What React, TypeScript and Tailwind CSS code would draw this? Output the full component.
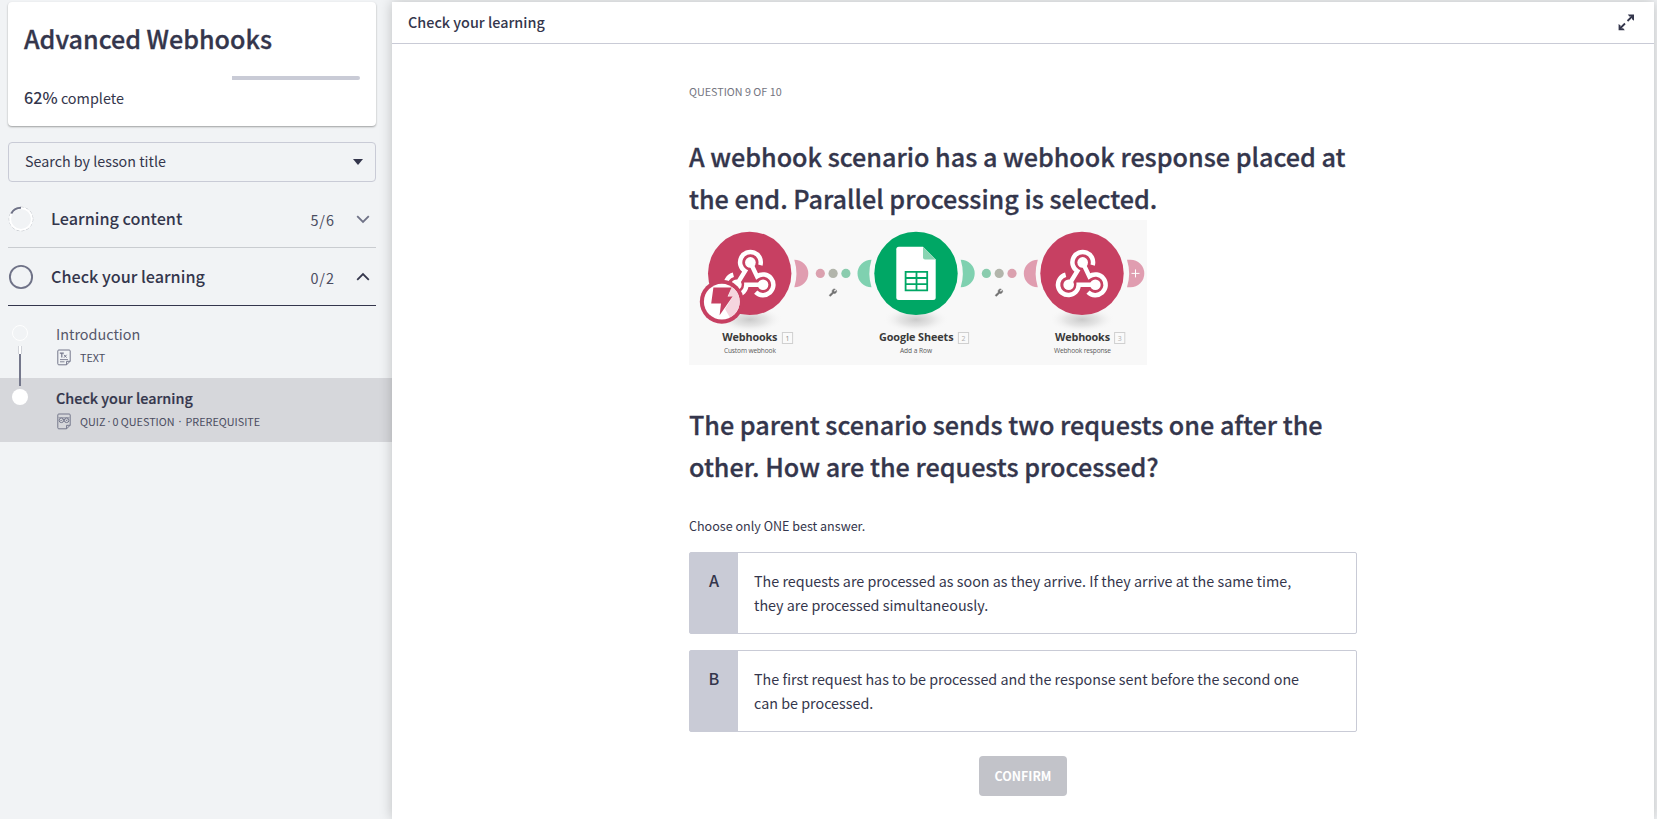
import type { ReactNode } from "react";

function ExpandIcon() {
  return (
    <svg width="17" height="17" viewBox="0 0 17 17" fill="none" stroke="#34364c" strokeWidth="1.8">
      <path d="M9.5 7L14.5 2" />
      <path d="M7 9.5L2 14.5" />
      <path d="M9.8 0.6H16V6.8L14 5.2V2.6H11.4z" fill="#34364c" stroke="none" />
      <path d="M6.8 16.2H0.6V10L2.6 11.6V14.2H5.2z" fill="#34364c" stroke="none" />
    </svg>
  );
}

function Chevron({ up }: { up?: boolean }) {
  return (
    <svg width="14" height="14" viewBox="0 0 14 14" fill="none" stroke={up ? "#34364c" : "#6f7287"} strokeWidth="1.8">
      <path d={up ? "M1.2 9.8L7 4l5.8 5.8" : "M1.2 4.2L7 10l5.8-5.8"} />
    </svg>
  );
}

function Ring({ partial }: { partial?: boolean }) {
  return (
    <svg width="26" height="26" viewBox="0 0 26 26" fill="none">
      {partial ? (
        <>
          <circle cx="13" cy="13" r="11.8" stroke="#aeb2ba" strokeWidth="0.8" strokeDasharray="3 2" />
          <circle cx="13" cy="13" r="10.9" stroke="#fff" strokeWidth="1.8" />
          <path d="M3.3 7.4A11.2 11.2 0 0 1 13 1.8" stroke="#6f7287" strokeWidth="2" />
        </>
      ) : (
        <circle cx="13" cy="13" r="11.1" stroke="#6f7287" strokeWidth="1.9" />
      )}
    </svg>
  );
}

function LessonIcon({ quiz }: { quiz?: boolean }) {
  return (
    <svg width="14" height="17" viewBox="0 0 14 17" fill="none" stroke="#74778b" strokeWidth="1">
      <path d="M1.8 1h10.4a1 1 0 0 1 1 1v10.2l-3.6 3.6H1.8a1 1 0 0 1-1-1V2a1 1 0 0 1 1-1z" />
      <path d="M13.2 12.3H9.6v3.5" />
      {quiz ? (
        <>
          <circle cx="4.4" cy="7.3" r="2.3" />
          <circle cx="9.6" cy="7.3" r="2.3" />
          <path d="M3.4 7.2l.8.8 1.3-1.5M8.8 6.5l1.6 1.6M10.4 6.5L8.8 8.1" strokeWidth="0.8" />
          <path d="M1.5 4.6h11" strokeWidth="0.6" />
        </>
      ) : (
        <>
          <path d="M2.8 4.2h4M4.8 4.2v4.3" strokeWidth="1.2" />
          <path d="M7 5.8l2.6 2.8M9.6 5.8L7 8.6" />
          <path d="M3 10.6h8M3 12.8h4.5" strokeWidth="0.9" />
        </>
      )}
    </svg>
  );
}

function HookNode({ cx }: { cx: number }) {
  return (
    <>
      <circle cx={cx} cy="53.4" r="41.7" fill="#c74062" />
      <g transform={`translate(${cx} 53.4) scale(0.3333) translate(-111 -100)`}>
        <g fill="none" stroke="#fff" strokeWidth="13.5">
          <path d="M143 75A31 31 0 1 0 97 93L73 132" />
          <path d="M113 67L133 109A31 31 0 1 1 129 156" />
          <path d="M62 104A31 31 0 1 0 101 134H151" />
        </g>
        <g fill="#fff">
          <circle cx="113" cy="67" r="16" />
          <circle cx="71" cy="134" r="16" />
          <circle cx="151" cy="134" r="16" />
        </g>
      </g>
    </>
  );
}

function Wrench({ x }: { x: number }) {
  return (
    <g transform={`translate(${x - 4.7} 68.2) scale(0.38)`}>
      <path
        d="M14.7 6.3a1 1 0 0 0 0 1.4l1.6 1.6a1 1 0 0 0 1.4 0l3.77-3.77a6 6 0 0 1-7.94 7.94l-6.91 6.91a2.12 2.12 0 0 1-3-3l6.91-6.91a6 6 0 0 1 7.94-7.94z"
        fill="#707070"
        stroke="#707070"
        strokeWidth="1.5"
      />
    </g>
  );
}

function Dots({ x, colors }: { x: number; colors: string[] }) {
  return (
    <>
      {colors.map((c, i) => (
        <circle key={i} cx={x + i * 12.8} cy="53.4" r="4.6" fill={c} />
      ))}
    </>
  );
}

function NodeLabel(p: { x: number; w: number; name: string; n: string; boxX: number; sub: string; subX: number; subW: number; dark?: boolean }) {
  return (
    <g className="font-['Open_Sans',sans-serif]">
      <text x={p.x} y="120.8" textLength={p.w} className="text-[10.8px] font-bold" fill="#3a3a3a">
        {p.name}
      </text>
      <rect x={p.boxX} y="112.5" width="10.2" height="11" fill="#fafafa" stroke="#d0d0d0" />
      <text x={p.boxX + 5.1} y="120.5" textAnchor="middle" className="text-[7px]" fill={p.dark ? "#8a8a8a" : "#b0b0b0"}>
        {p.n}
      </text>
      <text x={p.subX} y="133.3" textLength={p.subW} className="text-[6.6px]" fill="#5a5a5a">
        {p.sub}
      </text>
    </g>
  );
}

function ScenarioDiagram() {
  const pink = "#dba1af";
  const gray = "#b2b5ab";
  const green = "#8accae";
  return (
    <svg width="458" height="145" viewBox="0 0 458 145" className="mt-px block">
      <defs>
        <radialGradient id="shade">
          <stop offset="0" stopColor="#cacaca" />
          <stop offset="0.5" stopColor="#e0e0e0" stopOpacity="0.8" />
          <stop offset="1" stopColor="#f8f8f8" stopOpacity="0" />
        </radialGradient>
        <clipPath id="badge">
          <circle cx="32.8" cy="81.7" r="17.9" />
        </clipPath>
      </defs>
      <rect width="458" height="145" fill="#f8f8f8" />
      {[60.7, 227, 393].map((x) => (
        <ellipse key={x} cx={x} cy="99.5" rx="33" ry="13" fill="url(#shade)" />
      ))}

      <path d="M105.3 39.7A14 13.8 0 0 1 105.3 67.3A46.7 46.7 0 0 0 105.3 39.7z" fill="#e09db0" />
      <path d="M182.5 39.7A14 13.8 0 0 0 182.5 67.3A46.7 46.7 0 0 1 182.5 39.7z" fill="#7fd1b0" />
      <path d="M271.7 39.7A14 13.8 0 0 1 271.7 67.3A46.7 46.7 0 0 0 271.7 39.7z" fill="#7fd1b0" />
      <path d="M348.8 39.7A14 13.8 0 0 0 348.8 67.3A46.7 46.7 0 0 1 348.8 39.7z" fill="#e09db0" />
      <path d="M438 39.7H441.5A13.8 13.8 0 0 1 441.5 67.3H438A46.7 46.7 0 0 0 438 39.7z" fill="#e09db0" />
      <path d="M442.5 53.4h8M446.5 49.4v8" stroke="#fff" strokeWidth="1" />

      <Dots x={131.3} colors={[pink, gray, green]} />
      <Dots x={297.4} colors={[green, gray, pink]} />
      <Wrench x={144} />
      <Wrench x={310} />

      <HookNode cx={60.7} />
      <HookNode cx={393} />

      <circle cx="227" cy="53.4" r="41.7" fill="#00a765" />
      <path d="M209.8 26.7H234L246.7 39.5V77.5a2.5 2.5 0 0 1-2.5 2.5H209.8a2.5 2.5 0 0 1-2.5-2.5V29.2a2.5 2.5 0 0 1 2.5-2.5z" fill="#fff" />
      <path d="M234 26.7L246.7 39.5H236a2 2 0 0 1-2-2z" fill="#89d4b2" />
      <path d="M216.6 51.9h21.6v18.4h-21.6zM216.6 58h21.6M216.6 64.2h21.6M227.5 51.9v18.4" fill="none" stroke="#00a765" strokeWidth="1.8" />

      <circle cx="32.8" cy="81.7" r="22" fill="#c74062" />
      <circle cx="32.8" cy="81.7" r="17.9" fill="#fff" />
      <path d="M43 66L54 70V92L43 101L36 89L43.5 77L39.5 76z" fill="#f5d5de" clipPath="url(#badge)" />
      <path d="M24.4 67.6H42.6L38.6 76.6H43.6L30.6 95.2L32 83.4H22.2z" fill="#c74062" />

      <NodeLabel x={33.3} w={55} name="Webhooks" n="1" boxX={93.4} sub="Custom webhook" subX={34.9} subW={52} dark />
      <NodeLabel x={190} w={74.5} name="Google Sheets" n="2" boxX={269.4} sub="Add a Row" subX={211} subW={32} />
      <NodeLabel x={366} w={55} name="Webhooks" n="3" boxX={425.6} sub="Webhook response" subX={365} subW={57} />
    </svg>
  );
}

function Section({ title, count, open, ring }: { title: string; count: string; open?: boolean; ring: ReactNode }) {
  return (
    <div className={`mr-4 ml-2 flex h-[58px] items-center border-b ${open ? "border-[#34364c]" : "border-[#c9ccd0]"}`}>
      {ring}
      <span className="ml-[17px] flex-1 text-[16.2px] font-medium">{title}</span>
      <span className="mr-[21px] pt-0.5 text-[14.4px] tracking-[1px] text-[#4b4d61]">{count}</span>
      <span className="mr-[6px]">
        <Chevron up={open} />
      </span>
    </div>
  );
}

function Dot({ className }: { className: string }) {
  return <span className={`font-['Noto_Sans',sans-serif] ${className}`}>·</span>;
}

function Answer({ letter, children }: { letter: string; children: ReactNode }) {
  return (
    <div className="mb-4 flex h-[82px] rounded-xs border border-[#c9cbd6]">
      <div className="w-[48px] bg-[#c9cbd6] pt-[15px] text-center text-[16.2px] leading-6 font-medium">{letter}</div>
      <div className="flex-1 py-4 pr-12 pl-4 text-[14.33px] leading-6">{children}</div>
    </div>
  );
}

export default function App() {
  return (
    <div className="flex h-[819px] w-[1657px] overflow-hidden bg-[#f1f3f5] font-['Noto_Sans_CJK_SC',sans-serif] text-[#34364c]">
      <aside className="w-[392px] shrink-0 pt-[2px]">
        <div className="mr-4 ml-2 h-[124px] rounded bg-white px-4 pt-4 shadow-[0_1px_2px_rgba(0,0,0,0.35)]">
          <h1 className="text-[25.1px] leading-10 font-medium [-webkit-text-stroke:0.3px]">Advanced Webhooks</h1>
          <div className="mt-[18px] flex h-1 justify-end">
            <div className="w-32 rounded-r-full bg-[#c9cbd6]" />
          </div>
          <p className="mt-[5px] text-[14.4px] leading-6">
            <span className="text-[16.2px] font-medium">62%</span> complete
          </p>
        </div>
        <div className="mt-4 mr-4 mb-2 ml-2 flex h-10 items-center justify-between rounded border border-[#c9cbd6] pr-3 pl-4 text-[14.3px]">
          <span className="pb-0.5">Search by lesson title</span>
          <svg width="10" height="6" viewBox="0 0 10 6">
            <path d="M0 0h10L5 6z" fill="#34364c" />
          </svg>
        </div>
        <Section title="Learning content" count="5/6" ring={<Ring partial />} />
        <Section title="Check your learning" count="0/2" open ring={<Ring />} />
        <div className="relative mt-2">
          <div className="flex h-16 py-2 pl-3">
            <div className="mt-[3px] size-4 rounded-full border border-white" />
            <div className="ml-7">
              <div className="text-[14.4px] leading-6 text-[#55576a]">Introduction</div>
              <div className="flex h-6 items-center pb-px pl-px text-[10.8px] text-[#4b4d61]">
                <LessonIcon />
                <span className="ml-[9px] pb-px">TEXT</span>
              </div>
            </div>
          </div>
          <div className="flex h-16 bg-[#d6d7db] py-2 pl-3">
            <div className="mt-[3px] size-4 rounded-full bg-white" />
            <div className="ml-7">
              <div className="text-[14.4px] leading-6 font-medium [-webkit-text-stroke:0.2px]">Check your learning</div>
              <div className="flex h-6 items-center pb-px pl-px text-[10.8px] text-[#4b4d61]">
                <LessonIcon quiz />
                <span className="ml-[9px] pb-px">QUIZ</span>
                <Dot className="mx-[2px] pb-px" />
                <span className="pb-px">0 QUESTION</span>
                <Dot className="mx-1 pb-px" />
                <span className="pb-px">PREREQUISITE</span>
              </div>
            </div>
          </div>
          <div className="absolute top-8 left-[19px] h-10 w-[2px] bg-[#74778b]">
            <div className="-ml-px h-2 w-1 border-x border-[#d0d2d8] bg-white" />
          </div>
        </div>
      </aside>

      <main className="relative mt-[2px] mr-[3px] flex-1 bg-white shadow-[0_0_12px_rgba(0,0,0,0.22)]">
        <header className="flex h-[42px] items-center justify-between border-b border-[#c9cbd6] pr-[19px] pl-4">
          <span className="pb-0.5 text-[14.4px] font-medium">Check your learning</span>
          <ExpandIcon />
        </header>
        <div className="mx-auto w-[668px] pt-9">
          <p className="text-[10.75px] leading-6 text-[#74757f]">QUESTION 9 OF 10</p>
          <h2 className="mt-[31px] text-[25.15px] leading-[42px] font-medium [-webkit-text-stroke:0.3px]">
            A webhook scenario has a webhook response placed at the end. Parallel processing is selected.
          </h2>
          <ScenarioDiagram />
          <h2 className="mt-[38px] text-[25.15px] leading-[42px] font-medium [-webkit-text-stroke:0.3px]">
            The parent scenario sends two requests one after the other. How are the requests processed?
          </h2>
          <p className="mt-[27px] mb-[14px] text-[12.55px] leading-6">Choose only ONE best answer.</p>
          <Answer letter="A">
            The requests are processed as soon as they arrive. If they arrive at the same time, they are processed simultaneously.
          </Answer>
          <Answer letter="B">
            The first request has to be processed and the response sent before the second one can be processed.
          </Answer>
          <button className="mx-auto mt-6 block h-10 w-[88px] rounded bg-[#c2c3c9] text-[12.4px] font-bold text-white">CONFIRM</button>
        </div>
      </main>
    </div>
  );
}
